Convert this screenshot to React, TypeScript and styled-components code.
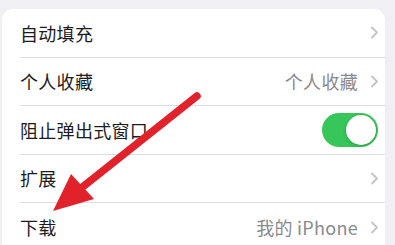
import React from 'react';
import styled, { createGlobalStyle } from 'styled-components';

const GlobalStyle = createGlobalStyle`
  html, body {
    margin: 0;
    padding: 0;
    background: #efeff4;
  }
  body {
    font-family: "Noto Sans CJK SC", "Noto Sans", sans-serif;
  }
`;

type Item = {
  label: string;
  value?: string;
  toggle?: boolean;
};

const items: Item[] = [
  { label: '自动填充' },
  { label: '个人收藏', value: '个人收藏' },
  { label: '阻止弹出式窗口', toggle: true },
  { label: '扩展' },
  { label: '下载', value: '我的 iPhone' },
];

const Chevron = () => (
  <svg width="9" height="13" viewBox="0 0 9 13">
    <polyline
      points="2,1.5 7,6.5 2,11.5"
      fill="none"
      stroke="#c4c4c7"
      strokeWidth="1.8"
      strokeLinecap="round"
      strokeLinejoin="round"
    />
  </svg>
);

const App = () => {
  return (
    <>
      <GlobalStyle />
      <Page>
        <Card>
          {items.map((item, i) => (
            <Row key={item.label}>
              <RowInner last={i === items.length - 1}>
                <Label>{item.label}</Label>
                <Right>
                  {item.value && <Value>{item.value}</Value>}
                  {item.toggle ? (
                    <Toggle>
                      <Knob />
                    </Toggle>
                  ) : (
                    <Chevron />
                  )}
                </Right>
              </RowInner>
            </Row>
          ))}
        </Card>
        <ArrowLayer width="395" height="245" viewBox="0 0 395 245">
          <line
            x1="197"
            y1="96"
            x2="80"
            y2="189"
            stroke="#e2222a"
            strokeWidth="7.5"
            strokeLinecap="round"
          />
          <polygon points="53,211 71,174 94,199" fill="#e2222a" />
        </ArrowLayer>
      </Page>
    </>
  );
};

const Page = styled.div`
  position: relative;
  width: 395px;
  height: 245px;
  overflow: hidden;
  padding: 9px 10px 0 2px;
  box-sizing: border-box;
`;

const Card = styled.div`
  background: #ffffff;
  border-radius: 11px;
  padding-left: 18px;
  height: 260px;
`;

const Row = styled.div`
  height: 48.5px;
`;

const RowInner = styled.div<{ last: boolean }>`
  height: 100%;
  box-sizing: border-box;
  display: flex;
  align-items: center;
  justify-content: space-between;
  padding-right: 6px;
  border-bottom: ${(p) => (p.last ? 'none' : '1px solid #dedee1')};
`;

const Label = styled.span`
  font-size: 18px;
  color: #1c1c1e;
  letter-spacing: 0.3px;
`;

const Right = styled.div`
  display: flex;
  align-items: center;
  gap: 12px;
`;

const Value = styled.span`
  font-size: 18px;
  color: #8a8a8e;
  letter-spacing: 0.3px;
`;

const Toggle = styled.div`
  width: 56px;
  height: 34px;
  border-radius: 17px;
  background: #36c659;
  display: flex;
  align-items: center;
  justify-content: flex-end;
  padding: 2px;
  box-sizing: border-box;
  margin-right: 1px;
`;

const Knob = styled.div`
  width: 30px;
  height: 30px;
  border-radius: 50%;
  background: #ffffff;
  box-shadow: 0 0 0 0.5px rgba(0, 0, 0, 0.12), 0 2px 4px rgba(0, 0, 0, 0.12);
`;

const ArrowLayer = styled.svg`
  position: absolute;
  left: 0;
  top: 0;
  pointer-events: none;
`;

export default App;
